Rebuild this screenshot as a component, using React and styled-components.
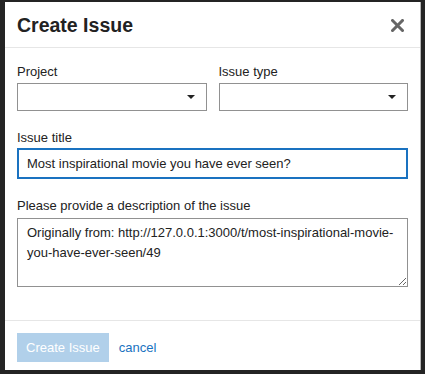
import React from 'react';
import styled, { createGlobalStyle } from 'styled-components';

const GlobalStyle = createGlobalStyle`
  html, body {
    margin: 0;
    padding: 0;
    height: 374px;
    overflow: hidden;
    background-color: #242424;
    font-family: "Liberation Sans", Arial, sans-serif;
  }
`;

const Modal = styled.div`
  margin: 2px 4px 0 5px;
  height: 368px;
  background-color: #fff;
  border-right: 1px solid #b5b5b5;
  box-sizing: border-box;
  display: flex;
  flex-direction: column;
`;

const ModalHeader = styled.div`
  display: flex;
  justify-content: space-between;
  align-items: center;
  padding: 11px 16px 10px 12px;
  border-bottom: 1px solid #e6e6e6;
`;

const Title = styled.h3`
  margin: 0;
  font-size: 19.5px;
  line-height: 24px;
  font-weight: bold;
  color: #222;
`;

const CloseButton = styled.button`
  border: none;
  background: none;
  padding: 0;
  width: 13px;
  height: 13px;
  display: flex;
  cursor: pointer;
  margin-top: 1px;
`;

const ModalBody = styled.div`
  padding: 16px 12px 33px 12px;
  display: flex;
  flex-direction: column;
  gap: 19px;
`;

const Row = styled.div`
  display: flex;
  gap: 12px;
`;

const Field = styled.div`
  display: flex;
  flex-direction: column;
  flex: 1;
`;

const Label = styled.label`
  font-size: 13px;
  line-height: 16px;
  color: #222;
  margin-bottom: ${props => props.gap || 3}px;
`;

const SelectBox = styled.div`
  height: 28px;
  box-sizing: border-box;
  border: 1px solid #919191;
  display: flex;
  align-items: center;
  justify-content: flex-end;
  padding-right: 11px;
`;

const TextInput = styled.input`
  height: 31px;
  box-sizing: border-box;
  border: 2px solid #1a72c0;
  outline: none;
  padding: 0 8px;
  font-family: "Liberation Sans", Arial, sans-serif;
  font-size: 13px;
  color: #222;
`;

const TextArea = styled.textarea`
  height: 69px;
  box-sizing: border-box;
  border: 1px solid #919191;
  padding: 4px 9px;
  font-family: "Liberation Sans", Arial, sans-serif;
  font-size: 13px;
  line-height: 20px;
  color: #222;
  resize: vertical;
  outline: none;
`;

const ModalFooter = styled.div`
  border-top: 1px solid #e6e6e6;
  padding: 12px 12px;
  display: flex;
  align-items: center;
  gap: 10px;
`;

const PrimaryButton = styled.button`
  height: 29px;
  padding: 0 9px;
  border: none;
  background-color: #b1d0ea;
  color: #fff;
  font-family: "Liberation Sans", Arial, sans-serif;
  font-size: 13px;
`;

const LinkButton = styled.a`
  color: #1a72c0;
  font-size: 13px;
  text-decoration: none;
  cursor: pointer;
`;

const CaretDown = () => (
  <svg width="8" height="4" viewBox="0 0 8 4">
    <path d="M0 0 L8 0 L4 4 Z" fill="#222" />
  </svg>
);

const CloseIcon = () => (
  <svg width="13" height="13" viewBox="0 0 13 13">
    <path d="M1.5 1.5 L11.5 11.5 M11.5 1.5 L1.5 11.5" stroke="#666" strokeWidth="3" strokeLinecap="square" />
  </svg>
);

export default function App() {
  return (
    <>
      <GlobalStyle />
      <Modal>
        <ModalHeader>
          <Title>Create Issue</Title>
          <CloseButton aria-label="close"><CloseIcon /></CloseButton>
        </ModalHeader>
        <ModalBody>
          <Row>
            <Field>
              <Label>Project</Label>
              <SelectBox><CaretDown /></SelectBox>
            </Field>
            <Field>
              <Label>Issue type</Label>
              <SelectBox><CaretDown /></SelectBox>
            </Field>
          </Row>
          <Field>
            <Label gap={2}>Issue title</Label>
            <TextInput defaultValue="Most inspirational movie you have ever seen?" />
          </Field>
          <Field>
            <Label gap={4}>Please provide a description of the issue</Label>
            <TextArea defaultValue="Originally from: http://127.0.0.1:3000/t/most-inspirational-movie-you-have-ever-seen/49" />
          </Field>
        </ModalBody>
        <ModalFooter>
          <PrimaryButton disabled>Create Issue</PrimaryButton>
          <LinkButton>cancel</LinkButton>
        </ModalFooter>
      </Modal>
    </>
  );
}
